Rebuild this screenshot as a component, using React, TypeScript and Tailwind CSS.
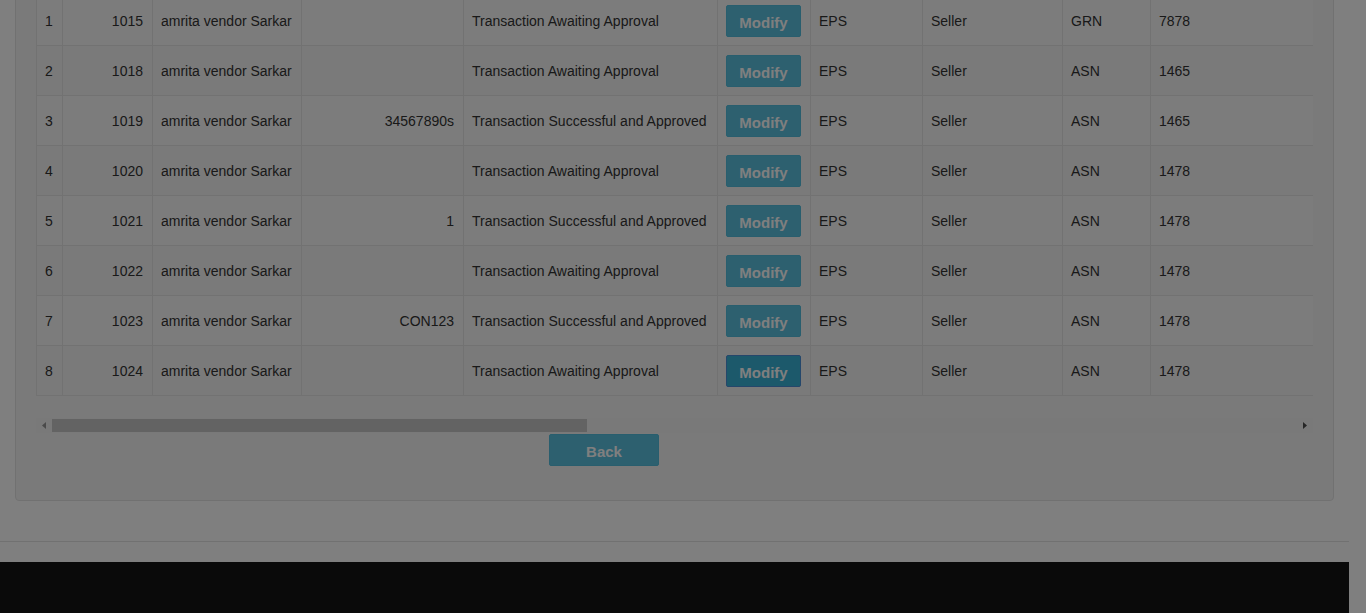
import React from 'react';

interface Txn {
  sno: number;
  id: number;
  vendor: string;
  ref: string;
  status: string;
  mode: string;
  role: string;
  doc: string;
  docNo: string;
}

const AWAIT = 'Transaction Awaiting Approval';
const OK = 'Transaction Successful and Approved';

const ROWS: Txn[] = [
  { sno: 1, id: 1015, vendor: 'amrita vendor Sarkar', ref: '', status: AWAIT, mode: 'EPS', role: 'Seller', doc: 'GRN', docNo: '7878' },
  { sno: 2, id: 1018, vendor: 'amrita vendor Sarkar', ref: '', status: AWAIT, mode: 'EPS', role: 'Seller', doc: 'ASN', docNo: '1465' },
  { sno: 3, id: 1019, vendor: 'amrita vendor Sarkar', ref: '34567890s', status: OK, mode: 'EPS', role: 'Seller', doc: 'ASN', docNo: '1465' },
  { sno: 4, id: 1020, vendor: 'amrita vendor Sarkar', ref: '', status: AWAIT, mode: 'EPS', role: 'Seller', doc: 'ASN', docNo: '1478' },
  { sno: 5, id: 1021, vendor: 'amrita vendor Sarkar', ref: '1', status: OK, mode: 'EPS', role: 'Seller', doc: 'ASN', docNo: '1478' },
  { sno: 6, id: 1022, vendor: 'amrita vendor Sarkar', ref: '', status: AWAIT, mode: 'EPS', role: 'Seller', doc: 'ASN', docNo: '1478' },
  { sno: 7, id: 1023, vendor: 'amrita vendor Sarkar', ref: 'CON123', status: OK, mode: 'EPS', role: 'Seller', doc: 'ASN', docNo: '1478' },
  { sno: 8, id: 1024, vendor: 'amrita vendor Sarkar', ref: '', status: AWAIT, mode: 'EPS', role: 'Seller', doc: 'ASN', docNo: '1478' },
];

const td = 'border border-[#e4e4e4] px-2 pt-[9px] pb-2 align-middle whitespace-nowrap overflow-hidden';

export default function App() {
  return (
    <div className="relative min-h-screen bg-white font-['Liberation_Sans',Arial,sans-serif] text-[14px] leading-5 text-[#333]">
      <div className="w-[1349px]">
        {/* panel (top is scrolled off) */}
        <div className="px-[15px] -mt-[26px]">
          <div className="rounded border border-[#e3e3e3] bg-[#f5f5f5] px-5 pt-5 pb-[34px] shadow-[inset_0_1px_1px_rgba(0,0,0,0.05)]">
            <div className="overflow-hidden">
              <table className="table-fixed border-collapse w-[2970px] mb-[22px]">
                <colgroup>
                  <col className="w-[26px]" />
                  <col className="w-[90px]" />
                  <col className="w-[149px]" />
                  <col className="w-[162px]" />
                  <col className="w-[254px]" />
                  <col className="w-[93px]" />
                  <col className="w-[112px]" />
                  <col className="w-[140px]" />
                  <col className="w-[88px]" />
                  <col className="w-[180px]" />
                  <col />
                </colgroup>
                <tbody>
                  {ROWS.map(r => (
                    <tr key={r.sno} className={r.sno % 2 === 1 ? 'bg-[#f9f9f9]' : ''}>
                      <td className={td}>{r.sno}</td>
                      <td className={`${td} text-right pr-[9px]`}>{r.id}</td>
                      <td className={td}>{r.vendor}</td>
                      <td className={`${td} text-right pr-[9px]`}>{r.ref}</td>
                      <td className={td}>{r.status}</td>
                      <td className={td}>
                        <button
                          className={`h-8 w-[75px] rounded-[2px] border pt-1 text-[15px] font-bold text-white ${
                            r.sno === 8 ? 'bg-[#39b3d7] border-[#4a8ed6]' : 'bg-[#5bc0de] border-[#52bcdc]'
                          }`}
                        >
                          Modify
                        </button>
                      </td>
                      <td className={td}>{r.mode}</td>
                      <td className={td}>{r.role}</td>
                      <td className={td}>{r.doc}</td>
                      <td className={td}>{r.docNo}</td>
                      <td className={td}></td>
                    </tr>
                  ))}
                </tbody>
              </table>
            </div>

            {/* horizontal scrollbar */}
            <div className="flex h-[15px] items-center bg-[#f3f3f3]">
              <div className="flex w-4 justify-center">
                <svg width="4" height="7" viewBox="0 0 4 7"><polygon points="4,0 0,3.5 4,7" fill="#959595" /></svg>
              </div>
              <div className="h-[13px] w-[535px] bg-[#c6c6c6]" />
              <div className="flex-1" />
              <div className="flex w-4 justify-center">
                <svg width="4" height="7" viewBox="0 0 4 7"><polygon points="0,0 4,3.5 0,7" fill="#4d4d4d" /></svg>
              </div>
            </div>

            <div className="mt-px pl-[513px]">
              <button className="h-8 w-[110px] rounded-[2px] border border-[#52bcdc] bg-[#5bc0de] pt-1 text-[15px] font-bold text-white">
                Back
              </button>
            </div>
          </div>
        </div>

        <hr className="mt-10 border-t border-[#e2e2e2]" />
        <div className="mt-5 h-[120px] bg-[#141414]" />
      </div>

      {/* modal backdrop */}
      <div className="fixed inset-0 bg-black/50" />
    </div>
  );
}
